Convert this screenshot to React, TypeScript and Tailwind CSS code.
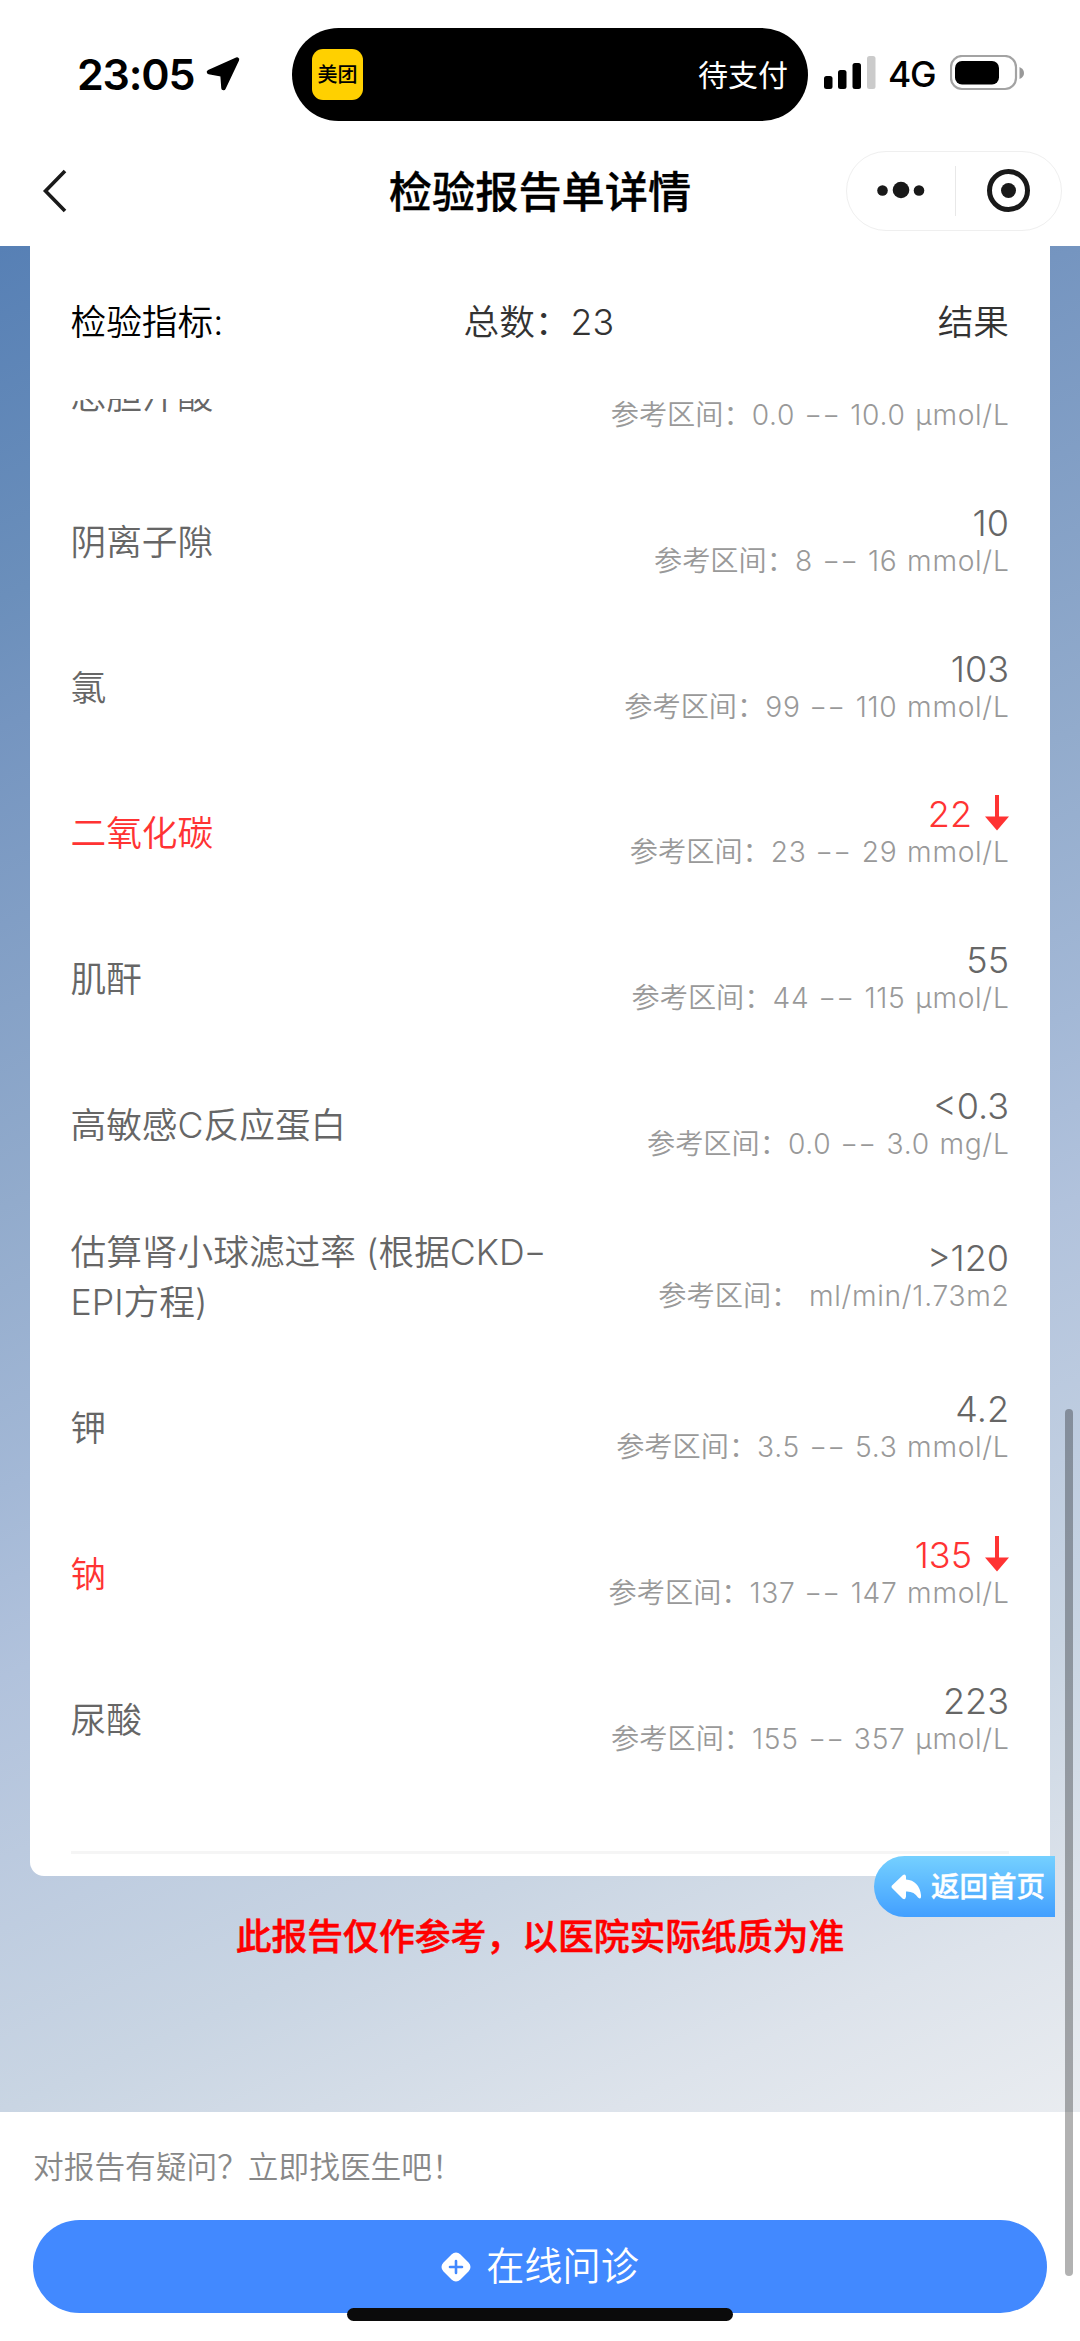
interface Indicator {
  name: string
  value: string
  range: string
  low?: boolean
  tall?: boolean
}

const indicators: Indicator[] = [
  { name: '总胆汁酸', value: '', range: '0.0 -- 10.0 µmol/L' },
  { name: '阴离子隙', value: '10', range: '8 -- 16 mmol/L' },
  { name: '氯', value: '103', range: '99 -- 110 mmol/L' },
  { name: '二氧化碳', value: '22', range: '23 -- 29 mmol/L', low: true },
  { name: '肌酐', value: '55', range: '44 -- 115 µmol/L' },
  { name: '高敏感C反应蛋白', value: '<0.3', range: '0.0 -- 3.0 mg/L' },
  { name: '估算肾小球滤过率 (根据CKD-EPI方程)', value: '>120', range: '\u00a0ml/min/1.73m2', tall: true },
  { name: '钾', value: '4.2', range: '3.5 -- 5.3 mmol/L' },
  { name: '钠', value: '135', range: '137 -- 147 mmol/L', low: true },
  { name: '尿酸', value: '223', range: '155 -- 357 µmol/L' },
]

// hyphens are drawn wider than the font's own
function WideDashes({ text }: { text: string }) {
  return (
    <>
      {text.split(/(-)/).map((part, i) =>
        part === '-' ? (
          <span key={i} className="mx-[0.08em] inline-block scale-x-[1.4]">
            -
          </span>
        ) : (
          part
        ),
      )}
    </>
  )
}

function StatusBar() {
  return (
    <div className="flex h-[149px] items-start pt-7">
      <div className="flex h-[93px] w-[292px] items-center pl-[77px] text-black">
        <span className="-mt-[1px] w-[118px] text-[43px] font-semibold leading-none tracking-[-1.2px]">23:05</span>
        <svg className="-mt-[2px] ml-[10px]" width="36" height="36" viewBox="0 0 36 36">
          <path d="M32 3.500 L4 16 L17.500 18.500 L18.500 32 Z" fill="#000" stroke="#000" strokeWidth="4.500" strokeLinejoin="round" />
        </svg>
      </div>
      <div className="flex h-[93px] w-[516px] items-center justify-between rounded-full bg-black pl-5 pr-[20px]">
        <div className="flex h-[51px] w-[51px] items-center justify-center rounded-[11px] bg-[#ffd000] text-[20px] font-medium leading-none text-black">
          美团
        </div>
        <span className="text-[30px] leading-none text-white">待支付</span>
      </div>
      <div className="flex h-[93px] items-center pl-4">
        <svg className="-mt-[3px]" width="52" height="34" viewBox="0 0 52 34">
          <rect x="0" y="20" width="8.500" height="13" rx="2.500" />
          <rect x="14" y="14" width="8.500" height="19" rx="2.500" />
          <rect x="28.500" y="7" width="8.500" height="26" rx="2.500" />
          <rect x="43" y="0" width="8.500" height="33" rx="2.500" fill="#cbcbcb" />
        </svg>
        <span className="ml-[12px] w-[48px] text-[35.5px] font-medium leading-none tracking-[-1.4px] text-black">4G</span>
        <svg className="-mt-[3px] ml-[14px]" width="76" height="36" viewBox="0 0 76 36">
          <rect x="1" y="1" width="65" height="33" rx="11" fill="none" stroke="#a3a3a3" strokeWidth="2.200" />
          <rect x="5" y="6" width="44" height="23.500" rx="7" />
          <path d="M69.500 12 Q74 14 74 18 Q74 22 69.500 24 Z" fill="#999" />
        </svg>
      </div>
    </div>
  )
}

function NavBar() {
  return (
    <div className="flex h-[97px] items-start justify-between pl-[42px] pr-[18px]">
      <svg className="mt-[20px]" width="26" height="44" viewBox="0 0 26 44">
        <path d="M23 2 L3.500 22 L23 42" fill="none" stroke="#1a1a1a" strokeWidth="3.600" />
      </svg>
      <h1 className="ml-[166px] mt-[21px] text-[43.2px] font-medium leading-[44px] text-black [-webkit-text-stroke:0.3px]">
        检验报告单详情
      </h1>
      <div className="mt-[2px] flex h-[80px] w-[216px] items-center rounded-full border border-[#efefef]">
        <svg width="108" height="50" viewBox="0 0 108 50">
          <circle cx="35.500" cy="24.500" r="5.300" fill="#191919" />
          <circle cx="54" cy="24" r="8.300" fill="#191919" />
          <circle cx="72" cy="24.500" r="5.300" fill="#191919" />
        </svg>
        <div className="h-[50px] w-px bg-[#e8e8e8]" />
        <svg className="ml-[31px]" width="44" height="44" viewBox="0 0 44 44">
          <circle cx="21.500" cy="21.500" r="19" fill="none" stroke="#191919" strokeWidth="5" />
          <circle cx="21.500" cy="21.500" r="7.500" fill="#191919" />
        </svg>
      </div>
    </div>
  )
}

function IndicatorRow({ item }: { item: Indicator }) {
  return (
    <div
      className={`flex shrink-0 items-center justify-between ${item.tall ? 'h-[158px]' : 'h-[145.7px]'} ${
        item.low ? 'text-[#ff3333]' : 'text-[#666]'
      }`}
    >
      <div className="w-[495px] text-[35.7px] leading-[50px]">
        <WideDashes text={item.name} />
      </div>
      <div className="flex flex-col items-end">
        <div className="flex h-[38px] items-center text-[36px] leading-[38px]">
          <span>{item.value}</span>
          {item.low && (
            <svg className="-mt-[3px] ml-[13px]" width="24" height="36" viewBox="0 0 24 36">
              <path d="M10 0 H14 V21.500 H24 L12 35.500 L0 21.500 H10 Z" fill="#ff3333" />
            </svg>
          )}
        </div>
        <div className="-mr-[0.5px] h-[38px] whitespace-nowrap text-[28.2px] leading-[38px] text-[#999]">
          参考区间：
          <span className="tracking-[0.7px] [word-spacing:1px]">
            <WideDashes text={item.range} />
          </span>
        </div>
      </div>
    </div>
  )
}

export default function App() {
  return (
    <div className="relative flex h-[2341px] w-[1080px] flex-col overflow-hidden bg-white font-[Inter,'Noto_Sans_CJK_SC',sans-serif]">
      <StatusBar />
      <NavBar />

      <main className="flex h-[1866px] flex-col bg-[linear-gradient(156deg,#5780b5_0%,#6b8fbb_15%,#7595c0_20.5%,#92abcc_41%,#a3b8d6_53%,#b1c2dc_61%,#c9d5e3_79.5%,#dde3eb_91%,#e9ecf0_100%)] px-[30px]">
        <section className="flex h-[1630px] flex-col rounded-b-[14px] bg-white pl-[40.5px] pr-[41px] font-[350]">
          <div className="flex h-[153px] shrink-0 items-center text-[35.7px] leading-none text-[#333]">
            <span className="w-[393px] text-black">检验指标:</span>
            <span className="flex-1">总数：23</span>
            <span>结果</span>
          </div>
          <div className="h-[1452px] shrink-0 overflow-hidden">
            <div className="-mt-[75.5px] flex flex-col">
              {indicators.map((item) => (
                <IndicatorRow key={item.name} item={item} />
              ))}
            </div>
          </div>
          <div className="h-[3px] shrink-0 bg-[#f5f5f5]" />
        </section>
        <p className="mt-[38px] text-center text-[35.8px] font-medium leading-[46px] text-[#ff0000] [-webkit-text-stroke:0.5px]">
          此报告仅作参考，以医院实际纸质为准
        </p>
      </main>

      <footer className="flex flex-1 flex-col px-[33px] font-[350]">
        <p className="mt-[34px] text-[30.7px] leading-[42px] text-[#888]">对报告有疑问？立即找医生吧！</p>
        <button className="mt-[32px] flex h-[93px] w-[1014px] items-center justify-center rounded-full bg-[#4289ff] pr-[2px] text-[38.2px] leading-none text-white">
          <svg className="mr-[13px]" width="34" height="34" viewBox="0 0 34 34">
            <rect x="5" y="5" width="24" height="24" rx="6" transform="rotate(45 17 17)" fill="#fff" />
            <path d="M17 11 V23 M11 17 H23" stroke="#4289ff" strokeWidth="2.600" strokeLinecap="round" />
          </svg>
          在线问诊
        </button>
      </footer>

      {/* floating back-to-home tab */}
      <div className="absolute left-[874px] top-[1856px] flex h-[61px] w-[181px] items-center rounded-l-full bg-linear-to-b from-[#75d0ff] to-[#429fff] pl-[17px] text-[28.5px] font-medium leading-none text-white [-webkit-text-stroke:0.4px]">
        <svg className="mr-[9px]" width="31" height="28" viewBox="0 0 31 28">
          <path d="M1.500 12 L12 2 Q14.500 0.500 15 3.500 V6.500 Q28 7.500 30 22 Q30.500 27.500 27 24.500 Q23 18 15 18.500 V23.500 Q14.500 27.500 11.500 25.500 L1.500 15.500 Q-0.500 13.500 1.500 12 Z" fill="#fff" />
        </svg>
        <span className="mt-[2px]">返回首页</span>
      </div>

      {/* scroll indicator and home bar */}
      <div className="absolute left-[1065px] top-[1409px] h-[867px] w-2 rounded-full bg-black/30" />
      <div className="absolute left-[347px] top-[2308px] h-[13px] w-[386px] rounded-full bg-[#0b0b0b]" />
    </div>
  )
}
